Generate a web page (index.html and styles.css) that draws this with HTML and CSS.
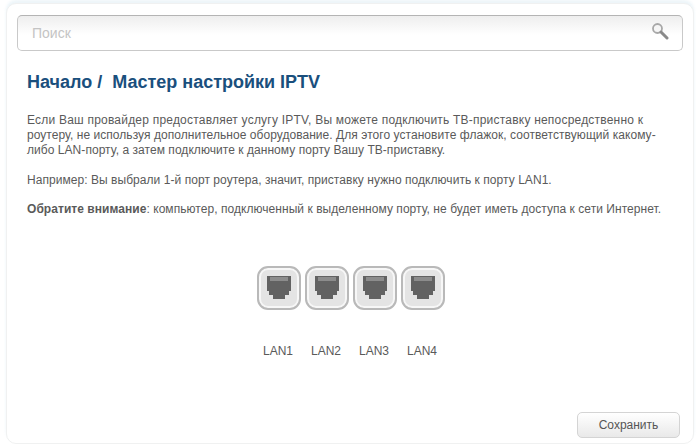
FILE: index.html
```html
<!DOCTYPE html>
<html lang="ru">
<head>
    <meta charset="UTF-8">
    <meta name="viewport" content="width=device-width, initial-scale=1.0">
    <title>Мастер настройки IPTV</title>
    <link rel="stylesheet" href="styles.css">
</head>
<body>

<div class="panel">
    <div class="search">
        <span class="search-text">Поиск</span>
        <svg class="search-icon" width="18" height="18" viewBox="0 0 18 18">
            <circle cx="6.5" cy="6.5" r="4.5" fill="#f6f6f6" stroke="#a8a8a8" stroke-width="1.8"/>
            <path d="M10 10l6 6" stroke="#8a8a8a" stroke-width="3" stroke-linecap="round"/>
        </svg>
    </div>

    <h1 class="title">Начало /&nbsp; Мастер настройки IPTV</h1>

    <p class="text"><span class="first-line">Если Ваш провайдер предоставляет услугу IPTV, Вы можете подключить ТВ-приставку непосредственно к</span><br>роутеру, не используя дополнительное оборудование. Для этого установите флажок, соответствующий какому-<br>либо LAN-порту, а затем подключите к данному порту Вашу ТВ-приставку.</p>
    <p class="text">Например: Вы выбрали 1-й порт роутера, значит, приставку нужно подключить к порту LAN1.</p>
    <p class="text"><b>Обратите внимание</b>: компьютер, подключенный к выделенному порту, не будет иметь доступа к сети Интернет.</p>

    <div class="ports">
        <div class="port">
            <div class="port-box">
                <svg width="26" height="25" viewBox="0 0 26 25"><path d="M1 1h24v15h-2v4h-4v4H7v-4H3v-4H1z" fill="#626262"/><path d="M4 2h18v4H4z" fill="#8c8c8c"/></svg>
            </div>
            <span class="port-label">LAN1</span>
        </div>
        <div class="port">
            <div class="port-box">
                <svg width="26" height="25" viewBox="0 0 26 25"><path d="M1 1h24v15h-2v4h-4v4H7v-4H3v-4H1z" fill="#626262"/><path d="M4 2h18v4H4z" fill="#8c8c8c"/></svg>
            </div>
            <span class="port-label">LAN2</span>
        </div>
        <div class="port">
            <div class="port-box">
                <svg width="26" height="25" viewBox="0 0 26 25"><path d="M1 1h24v15h-2v4h-4v4H7v-4H3v-4H1z" fill="#626262"/><path d="M4 2h18v4H4z" fill="#8c8c8c"/></svg>
            </div>
            <span class="port-label">LAN3</span>
        </div>
        <div class="port">
            <div class="port-box">
                <svg width="26" height="25" viewBox="0 0 26 25"><path d="M1 1h24v15h-2v4h-4v4H7v-4H3v-4H1z" fill="#626262"/><path d="M4 2h18v4H4z" fill="#8c8c8c"/></svg>
            </div>
            <span class="port-label">LAN4</span>
        </div>
    </div>

    <div class="actions">
        <button class="save-button" type="button">Сохранить</button>
    </div>
</div>

</body>
</html>
```

FILE: styles.css
```css
html, body {
    height: 100%;
}

body {
    margin: 0;
    padding: 3px 6px 0 6px;
    box-sizing: border-box;
    font-family: "Liberation Sans", Arial, sans-serif;
    color: #555;
    background-color: #fff;
    overflow: hidden;
}

.panel {
    box-sizing: border-box;
    height: 441px;
    padding: 11px 0 5px 0;
    border: 1px solid #f0f1f1;
    border-radius: 10px;
    background-color: #fff;
    display: flex;
    flex-direction: column;
    box-shadow: 0 -3px 3px rgba(225, 238, 245, 0.6);
}

.search {
    height: 36px;
    margin: 0 10px;
    padding: 0 13px 0 14px;
    box-sizing: border-box;
    border: 1px solid #c9c9c9;
    border-top-color: #b4b4b4;
    border-radius: 5px;
    background: linear-gradient(#eeeeee, #ffffff 55%);
    display: flex;
    align-items: center;
    justify-content: space-between;
}

.search-text {
    font-size: 14px;
    color: #c4c4c4;
}

.search-icon {
    margin-top: -4px;
}

.title {
    margin: 20px 0 20px 20px;
    font-size: 18px;
    line-height: 22px;
    font-weight: bold;
    color: #1a4f7d;
}

.text {
    margin: 0 20px 14.5px 20px;
    font-size: 12px;
    line-height: 15px;
    letter-spacing: 0.05px;
    color: #5a5a5a;
    white-space: nowrap;
}

.first-line {
    letter-spacing: 0.21px;
}

.ports {
    margin-top: 34px;
    padding-left: 2px;
    display: flex;
    justify-content: center;
    gap: 4px;
}

.port {
    width: 44px;
    display: flex;
    flex-direction: column;
    align-items: center;
}

.port-box {
    box-sizing: border-box;
    width: 44px;
    height: 44px;
    border: 2px solid #b9b9b9;
    border-radius: 11px;
    background-color: #e4e4e4;
    box-shadow: inset 0 0 0 2px #f7f7f7;
    display: flex;
    align-items: center;
    justify-content: center;
}

.port-label {
    margin-top: 34px;
    margin-right: 2px;
    font-size: 12px;
    line-height: 14px;
    white-space: nowrap;
    color: #5a5a5a;
}

.actions {
    margin-top: auto;
    padding-right: 13px;
    display: flex;
    justify-content: flex-end;
}

.save-button {
    width: 103px;
    height: 26px;
    border: 1px solid #d4d4d4;
    border-radius: 5px;
    background: linear-gradient(#ffffff, #e9e9e9);
    font-family: inherit;
    font-size: 12px;
    color: #555;
    cursor: pointer;
}
```
